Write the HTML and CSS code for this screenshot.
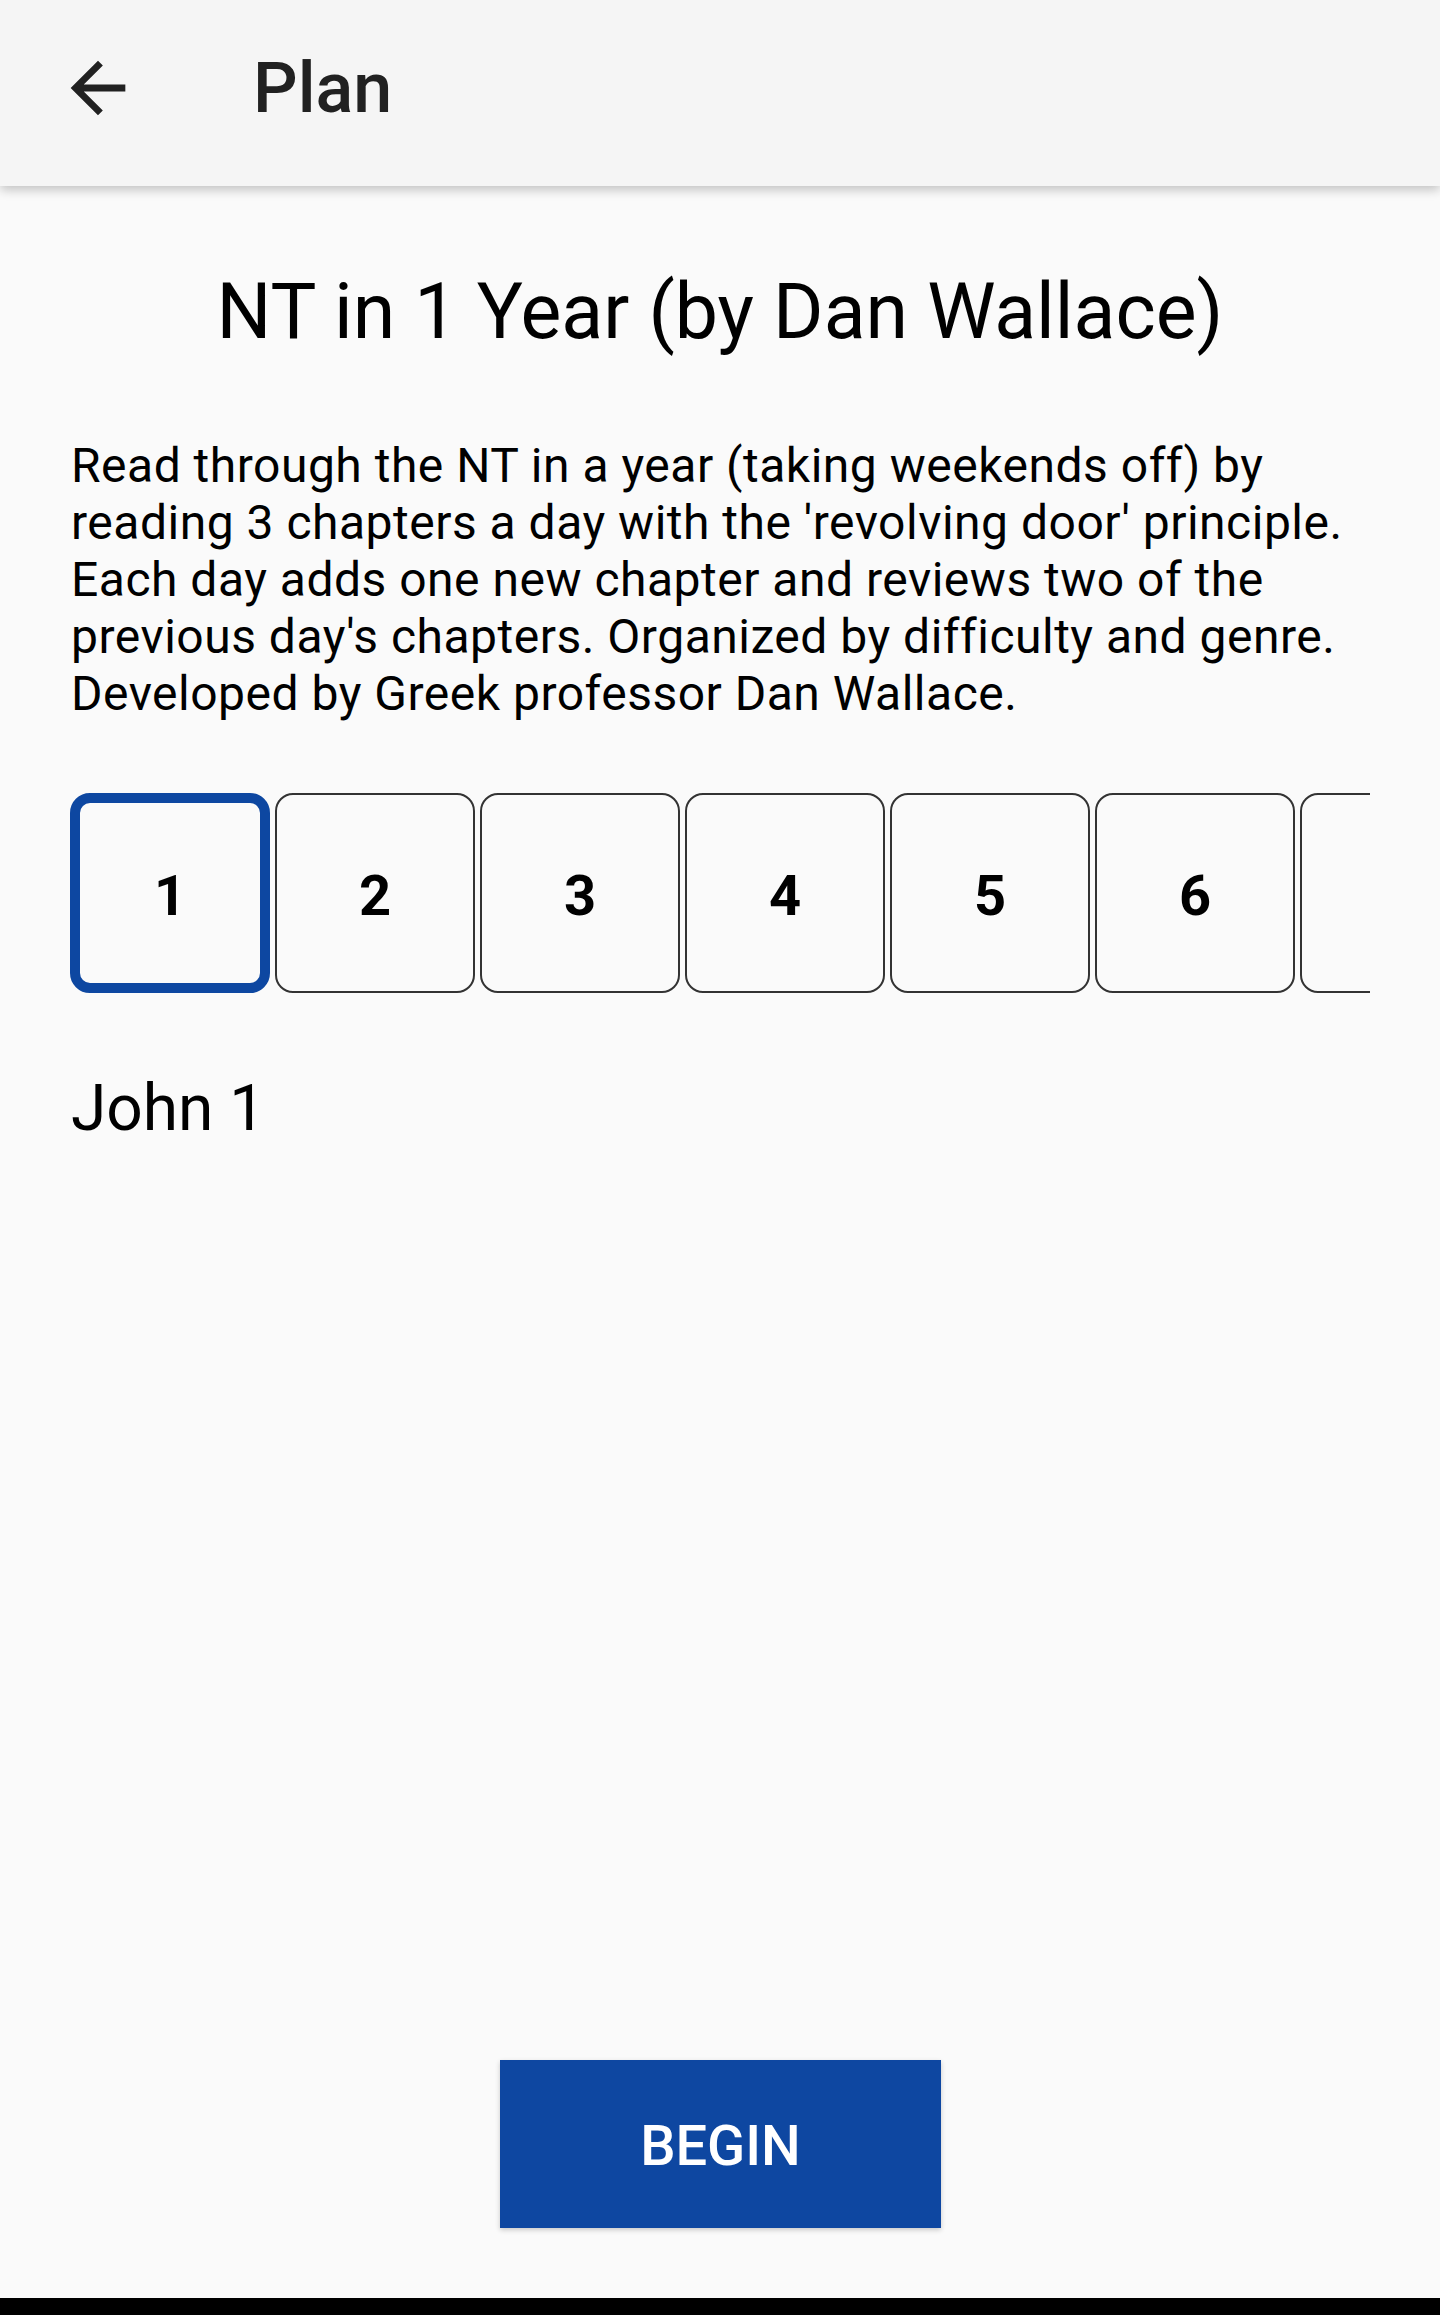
FILE: index.html
```html
<!DOCTYPE html>
<html lang="en">
<head>
<meta charset="utf-8">
<title>Plan</title>
<link rel="stylesheet" href="styles.css">
</head>
<body>
<div class="screen">
  <header class="appbar">
    <button class="back" aria-label="Back">
      <svg class="back-icon" viewBox="0 0 24 24" width="82" height="82"><path d="M20 11H7.83l5.59-5.59L12 4l-8 8 8 8 1.41-1.41L7.83 13H20v-2z" fill="#212121"/></svg>
    </button>
    <h1 class="appbar-title">Plan</h1>
  </header>
  <main class="content">
    <h2 class="plan-title">NT in 1 Year (by Dan Wallace)</h2>
    <p class="plan-desc">Read through the NT in a year (taking weekends off) by reading 3 chapters a day with the 'revolving door' principle. Each day adds one new chapter and reviews two of the previous day's chapters. Organized by difficulty and genre. Developed by Greek professor Dan Wallace.</p>
    <div class="days">
      <div class="day day-active">1</div>
      <div class="day">2</div>
      <div class="day">3</div>
      <div class="day">4</div>
      <div class="day">5</div>
      <div class="day">6</div>
      <div class="day">7</div>
      <div class="day">8</div>
    </div>
    <div class="reading">John 1</div>
  </main>
  <div class="actions">
    <button class="begin">BEGIN</button>
  </div>
  <div class="navbar"></div>
</div>
</body>
</html>
```

FILE: styles.css
```css
html, body {
  margin: 0;
  padding: 0;
}
body {
  background: #fafafa;
  font-family: Roboto, "Liberation Sans", Arial, sans-serif;
  color: #000;
}
.screen {
  display: flex;
  flex-direction: column;
  height: 2315px;
  overflow: hidden;
}
.appbar {
  flex: 0 0 auto;
  height: 186px;
  box-sizing: border-box;
  padding-bottom: 10px;
  background: #f5f5f5;
  display: flex;
  align-items: center;
  box-shadow: 0 4px 10px rgba(0, 0, 0, 0.22);
  position: relative;
  z-index: 1;
}
.back {
  margin-left: 57px;
  padding: 0;
  border: 0;
  background: none;
  width: 82px;
  height: 82px;
  display: flex;
}
.back-icon {
  display: block;
}
.appbar-title {
  margin: 0 0 0 114px;
  font-size: 70px;
  font-weight: 500;
  color: #212121;
  line-height: 82px;
}
.content {
  flex: 1 1 auto;
  padding: 0 70px;
}
.plan-title {
  margin: 81px 0 0;
  font-size: 77px;
  line-height: 90px;
  font-weight: 400;
  text-align: center;
}
.plan-desc {
  margin: 80px 0 0;
  padding-left: 1px;
  font-size: 48px;
  letter-spacing: 0.5px;
  line-height: 57px;
}
.days {
  margin-top: 71px;
  display: flex;
  gap: 5px;
  overflow: hidden;
  width: 1300px;
}
.day {
  flex: 0 0 200px;
  height: 200px;
  box-sizing: border-box;
  padding-top: 5px;
  border: 2px solid #333;
  border-radius: 18px;
  display: flex;
  align-items: center;
  justify-content: center;
  font-size: 56px;
  font-weight: 700;
}
.day-active {
  border: 10px solid #0d47a1;
  border-radius: 20px;
}
.reading {
  margin-top: 77px;
  padding-left: 1px;
  font-size: 64px;
  line-height: 78px;
}
.actions {
  flex: 0 0 auto;
  display: flex;
  justify-content: center;
  padding-bottom: 70px;
}
.begin {
  width: 441px;
  height: 168px;
  padding: 4px 0 0;
  border: 0;
  border-radius: 0;
  background: #0e47a1;
  color: #fff;
  font-family: Roboto, "Liberation Sans", Arial, sans-serif;
  font-size: 56px;
  font-weight: 500;
  box-shadow: 0 2px 5px rgba(0, 0, 0, 0.2);
  margin-left: 1px;
}
.navbar {
  flex: 0 0 17px;
  background: #000;
}
```
